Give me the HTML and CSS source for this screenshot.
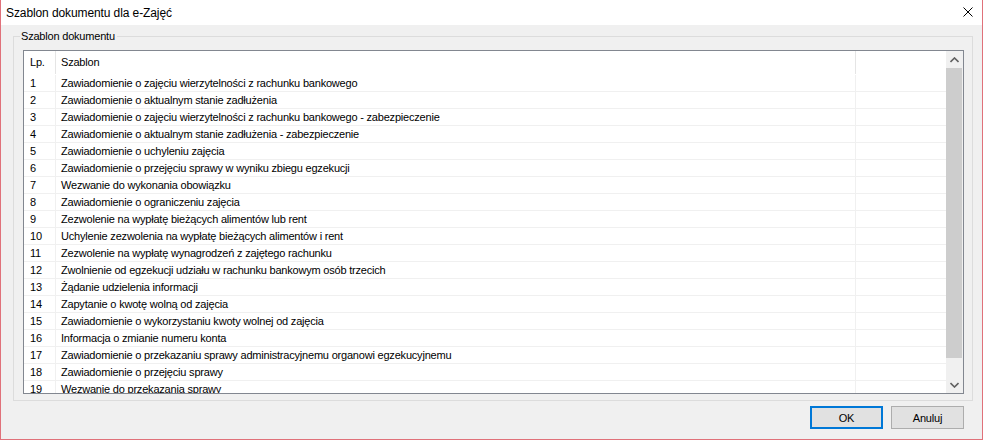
FILE: index.html
```html
<!DOCTYPE html>
<html lang="pl">
<head>
<meta charset="utf-8">
<title>Szablon dokumentu dla e-Zajęć</title>
<link rel="stylesheet" href="styles.css">
</head>
<body>
<div class="window">
  <div class="titlebar">
    <span class="title">Szablon dokumentu dla e-Zajęć</span>
    <span class="close">
      <svg width="10" height="10" viewBox="0 0 10 10"><path d="M0.5 0.5 L9.5 9.5 M9.5 0.5 L0.5 9.5" stroke="#000" stroke-width="1" fill="none"/></svg>
    </span>
  </div>
  <div class="content">
    <div class="group">
      <span class="group-label">Szablon dokumentu</span>
      <div class="list">
        <div class="list-body">
          <div class="header">
            <div class="hcell c-lp">Lp.</div>
            <div class="hcell c-name">Szablon</div>
            <div class="hcell c-rest"></div>
          </div>
          <div class="rows">
            <div class="row"><div class="cell c-lp">1</div><div class="cell c-name">Zawiadomienie o zajęciu wierzytelności z rachunku bankowego</div><div class="cell c-rest"></div></div>
            <div class="row"><div class="cell c-lp">2</div><div class="cell c-name">Zawiadomienie o aktualnym stanie zadłużenia</div><div class="cell c-rest"></div></div>
            <div class="row"><div class="cell c-lp">3</div><div class="cell c-name">Zawiadomienie o zajęciu wierzytelności z rachunku bankowego - zabezpieczenie</div><div class="cell c-rest"></div></div>
            <div class="row"><div class="cell c-lp">4</div><div class="cell c-name">Zawiadomienie o aktualnym stanie zadłużenia - zabezpieczenie</div><div class="cell c-rest"></div></div>
            <div class="row"><div class="cell c-lp">5</div><div class="cell c-name">Zawiadomienie o uchyleniu zajęcia</div><div class="cell c-rest"></div></div>
            <div class="row"><div class="cell c-lp">6</div><div class="cell c-name">Zawiadomienie o przejęciu sprawy w wyniku zbiegu egzekucji</div><div class="cell c-rest"></div></div>
            <div class="row"><div class="cell c-lp">7</div><div class="cell c-name">Wezwanie do wykonania obowiązku</div><div class="cell c-rest"></div></div>
            <div class="row"><div class="cell c-lp">8</div><div class="cell c-name">Zawiadomienie o ograniczeniu zajęcia</div><div class="cell c-rest"></div></div>
            <div class="row"><div class="cell c-lp">9</div><div class="cell c-name">Zezwolenie na wypłatę bieżących alimentów lub rent</div><div class="cell c-rest"></div></div>
            <div class="row"><div class="cell c-lp">10</div><div class="cell c-name">Uchylenie zezwolenia na wypłatę bieżących alimentów i rent</div><div class="cell c-rest"></div></div>
            <div class="row"><div class="cell c-lp">11</div><div class="cell c-name">Zezwolenie na wypłatę wynagrodzeń z zajętego rachunku</div><div class="cell c-rest"></div></div>
            <div class="row"><div class="cell c-lp">12</div><div class="cell c-name">Zwolnienie od egzekucji udziału w rachunku bankowym osób trzecich</div><div class="cell c-rest"></div></div>
            <div class="row"><div class="cell c-lp">13</div><div class="cell c-name">Żądanie udzielenia informacji</div><div class="cell c-rest"></div></div>
            <div class="row"><div class="cell c-lp">14</div><div class="cell c-name">Zapytanie o kwotę wolną od zajęcia</div><div class="cell c-rest"></div></div>
            <div class="row"><div class="cell c-lp">15</div><div class="cell c-name">Zawiadomienie o wykorzystaniu kwoty wolnej od zajęcia</div><div class="cell c-rest"></div></div>
            <div class="row"><div class="cell c-lp">16</div><div class="cell c-name">Informacja o zmianie numeru konta</div><div class="cell c-rest"></div></div>
            <div class="row"><div class="cell c-lp">17</div><div class="cell c-name">Zawiadomienie o przekazaniu sprawy administracyjnemu organowi egzekucyjnemu</div><div class="cell c-rest"></div></div>
            <div class="row"><div class="cell c-lp">18</div><div class="cell c-name">Zawiadomienie o przejęciu sprawy</div><div class="cell c-rest"></div></div>
            <div class="row"><div class="cell c-lp">19</div><div class="cell c-name">Wezwanie do przekazania sprawy</div><div class="cell c-rest"></div></div>
          </div>
        </div>
        <div class="scrollbar">
          <div class="sb-btn">
            <svg width="9" height="6" viewBox="0 0 9 6"><path d="M0.5 5 L4.5 1 L8.5 5" stroke="#606060" stroke-width="1.6" fill="none"/></svg>
          </div>
          <div class="sb-track"><div class="sb-thumb"></div></div>
          <div class="sb-btn">
            <svg width="9" height="6" viewBox="0 0 9 6"><path d="M0.5 1 L4.5 5 L8.5 1" stroke="#606060" stroke-width="1.6" fill="none"/></svg>
          </div>
        </div>
      </div>
    </div>
    <div class="buttons">
      <button class="btn btn-default">OK</button>
      <button class="btn">Anuluj</button>
    </div>
  </div>
</div>
</body>
</html>
```
FILE: styles.css
```css
html, body {
  margin: 0;
  padding: 0;
  background: #ffffff;
}
body {
  font-family: "Liberation Sans", Arial, sans-serif;
  font-size: 11px;
  letter-spacing: -0.2px;
  color: #000;
}
.window {
  width: 983px;
  height: 440px;
  box-sizing: border-box;
  border: 1px solid #e0717a;
  border-top: none;
  background: #f0f0f0;
  display: flex;
  flex-direction: column;
}
.titlebar {
  height: 25px;
  background: #ffffff;
  display: flex;
  align-items: center;
  justify-content: space-between;
  padding-left: 5px;
  padding-right: 9px;
  flex: none;
}
.title {
  font-size: 12px;
  letter-spacing: -0.1px;
  padding-top: 1px;
}
.close {
  display: flex;
  width: 10px;
  height: 10px;
  margin-top: -1px;
}
.content {
  flex: 1;
  display: flex;
  flex-direction: column;
  padding: 11px 9px 0 12px;
}
.group {
  position: relative;
  height: 365px;
  box-sizing: border-box;
  border: 1px solid #dcdcdc;
  padding: 13px 8px 6px 9px;
}
.group-label {
  position: absolute;
  left: 6px;
  top: -8px;
  padding: 0 2px 0 1px;
  background: #f0f0f0;
  line-height: 14px;
}
.list {
  height: 344px;
  box-sizing: border-box;
  border: 1px solid #828790;
  background: #fff;
  display: flex;
  overflow: hidden;
}
.list-body {
  flex: 1;
  overflow: hidden;
}
.header {
  display: flex;
  height: 24px;
}
.hcell {
  box-sizing: border-box;
  height: 23px;
  line-height: 23px;
  border-right: 1px solid #e5e5e5;
  padding-left: 6px;
}
.hcell.c-name { padding-left: 5px; }
.hcell.c-rest { border-right: none; }
.c-lp { width: 32px; flex: none; }
.c-name { width: 800px; flex: none; }
.c-rest { flex: 1; }
.row {
  display: flex;
  height: 17px;
  box-sizing: border-box;
  border-bottom: 1px solid #f0f0f0;
}
.cell {
  box-sizing: border-box;
  line-height: 15px;
  padding-top: 1px;
  border-right: 1px solid #f0f0f0;
  white-space: nowrap;
  overflow: hidden;
}
.cell.c-lp { padding-left: 6px; }
.cell.c-name { padding-left: 5px; }
.cell.c-rest { border-right: none; }
.scrollbar {
  width: 17px;
  flex: none;
  background: #f0f0f0;
  display: flex;
  flex-direction: column;
}
.sb-btn {
  height: 17px;
  flex: none;
  display: flex;
  align-items: center;
  justify-content: center;
}
.sb-track {
  flex: 1;
}
.sb-thumb {
  height: 290px;
  background: #cdcdcd;
  margin-right: 1px;
}
.buttons {
  display: flex;
  justify-content: flex-end;
  gap: 8px;
  padding-top: 5px;
  padding-right: 9px;
}
.btn {
  width: 73px;
  height: 23px;
  box-sizing: border-box;
  border: 1px solid #adadad;
  background: #e1e1e1;
  font-family: "Liberation Sans", Arial, sans-serif;
  font-size: 11px;
  letter-spacing: -0.2px;
  color: #000;
  padding: 0;
}
.btn-default {
  border: 2px solid #0078d7;
}
```
